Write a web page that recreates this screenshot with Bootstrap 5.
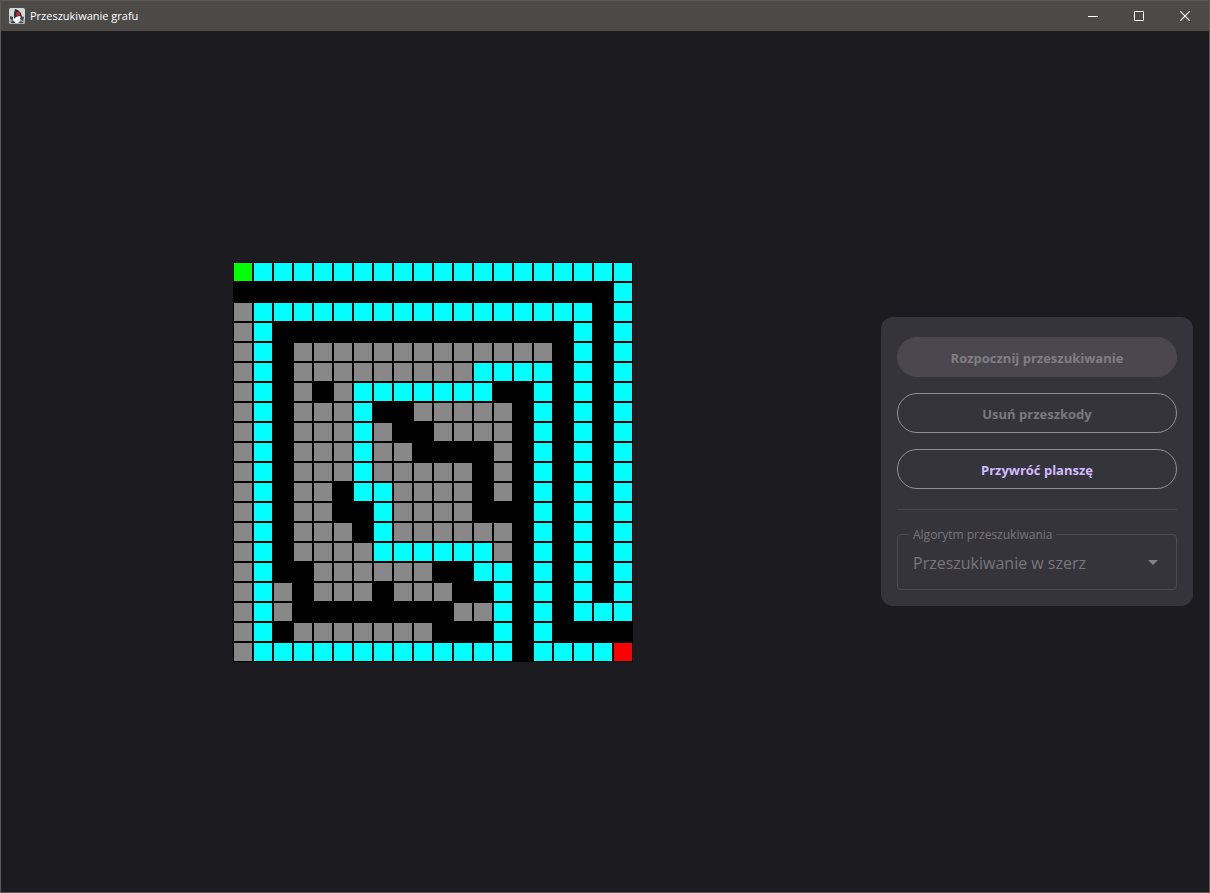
<!DOCTYPE html>
<html lang="pl" data-bs-theme="dark">
<head>
<meta charset="utf-8">
<meta name="viewport" content="width=device-width, initial-scale=1">
<title>Przeszukiwanie grafu</title>
<link href="https://cdn.jsdelivr.net/npm/bootstrap@5.3.0/dist/css/bootstrap.min.css" rel="stylesheet">
<style>
  body { font-family: "Open Sans", "Noto Sans", sans-serif; background: #1c1b1f; }
  .app-window { border: 1px solid #5a5957; }
  .title-bar { height: 30px; background: #4b4a47; color: #fff; font-size: 11px; line-height: 16px; padding-right: 1px; }
  .app-name { margin: 0 auto 0 5px; }
  .win-btn { width: 46px; height: 28px; color: #fff; }
  .board { display: grid; grid-template-columns: repeat(20, 18px); grid-auto-rows: 18px; gap: 2px; padding: 1px; background: #000; }
  .cell-start { background: #0f0; }
  .cell-end { background: #f00; }
  .cell-path { background: #0ff; }
  .cell-seen { background: #888; }
  .side-panel { width: 312px; padding: 20px 16px 16px; border-radius: 12px; background: #36343b; }
  .pill { height: 40px; font-size: 13px; font-weight: 700; line-height: 20px; border-radius: 20px; padding: 2px 12px 0; --bs-btn-disabled-opacity: 1; --bs-btn-disabled-color: #7b797f; }
  .pill-filled { --bs-btn-disabled-color: #807e84; --bs-btn-disabled-bg: #4a484e; --bs-btn-disabled-border-color: #4a484e; }
  .pill-outline { --bs-btn-color: #d0bcff; --bs-btn-border-color: #938f99; --bs-btn-disabled-border-color: #938f99; --bs-btn-hover-color: #d0bcff; --bs-btn-hover-border-color: #938f99; }
  .divider { color: #49454f; opacity: 1; margin: 20px 0 16px; }
  .field-box { border: 1px solid #4c4a51; border-radius: 4px; padding: 0 8px; height: 64px; }
  .field-box legend { float: none; width: auto; margin: 0 0 0 3px; padding: 1px 4px 0; font-size: 12px; line-height: 16px; color: #78767c; }
  .algo-select { appearance: none; width: 100%; height: 40px; border: 0; padding: 0 7px; background: transparent; color: #78767c; font-size: 16px; opacity: 1; }
  .caret { right: 10px; top: 17px; pointer-events: none; }
</style>
</head>
<body>
<div class="app-window min-vh-100 d-flex flex-column">
  <header class="title-bar d-flex align-items-center">
    <svg class="ms-2" width="16" height="16" viewBox="0 0 16 16" aria-hidden="true">
      <rect width="16" height="16" rx="2" fill="#d5d8db"/>
      <rect y="11" width="16" height="5" rx="2" fill="#a9adb2"/>
      <path d="M6 1l2 1 3 3 1 4-1 4-2 2H6l-2-3 1-5z" fill="#f5f6f7"/>
      <path d="M6 1l3 1 3 3 1 4-3-1-3 1-2 2V5z" fill="#303338"/>
      <path d="M4 9L1 8v3l3 1zM12 8l3 1-1 4-3-2zM3 12l3 2v1H2zM11 13l3 1v1h-4z" fill="#41464c"/>
      <circle cx="9" cy="6" r="2" fill="#d9232e"/>
    </svg>
    <span class="app-name">Przeszukiwanie grafu</span>
    <button class="btn win-btn p-0 border-0 rounded-0 d-flex align-items-center justify-content-center" aria-label="Minimalizuj"><svg width="10" height="10" stroke="currentColor"><path d="M0 5.5h10"/></svg></button>
    <button class="btn win-btn p-0 border-0 rounded-0 d-flex align-items-center justify-content-center" aria-label="Maksymalizuj"><svg width="10" height="10" stroke="currentColor" fill="none"><path d="M.5.5h9v9h-9z"/></svg></button>
    <button class="btn win-btn p-0 border-0 rounded-0 d-flex align-items-center justify-content-center" aria-label="Zamknij"><svg width="10" height="10" stroke="currentColor" stroke-width="1.2"><path d="M0 0l10 10M10 0L0 10"/></svg></button>
  </header>
  <main class="flex-grow-1 d-flex align-items-center">
    <div class="flex-grow-1 d-flex justify-content-center">
      <div class="board" id="board" role="img" aria-label="Plansza"></div>
    </div>
    <aside class="side-panel mx-3">
      <div class="d-grid gap-3">
        <button class="btn pill pill-filled" disabled>Rozpocznij przeszukiwanie</button>
        <button class="btn pill pill-outline" disabled>Usuń przeszkody</button>
        <button class="btn pill pill-outline">Przywróć planszę</button>
      </div>
      <hr class="divider">
      <fieldset class="field-box">
        <legend><label for="algo">Algorytm przeszukiwania</label></legend>
        <div class="position-relative">
          <select class="algo-select" id="algo" disabled><option>Przeszukiwanie w szerz</option></select>
          <svg class="caret position-absolute" width="10" height="5" fill="#848288"><path d="M0 0h10L5 5z"/></svg>
        </div>
      </fieldset>
    </aside>
  </main>
</div>
<script src="https://cdn.jsdelivr.net/npm/bootstrap@5.3.0/dist/js/bootstrap.bundle.min.js"></script>
<script>
  // S start, E end, c path, g visited, # obstacle
  const maze = [
    'Sccccccccccccccccccc',
    '###################c',
    'gccccccccccccccccc#c',
    'gc###############c#c',
    'gc#ggggggggggggg#c#c',
    'gc#gggggggggcccc#c#c',
    'gc#g#gccccccc##c#c#c',
    'gc#gggc##ggggg#c#c#c',
    'gc#gggcg##gggg#c#c#c',
    'gc#gggcgg####g#c#c#c',
    'gc#gggcggggg#g#c#c#c',
    'gc#gg#ccgggg#g#c#c#c',
    'gc#gg##cgggg###c#c#c',
    'gc#ggg#cgggggg#c#c#c',
    'gc#ggggccccccg#c#c#c',
    'gc##gggggg##cc#c#c#c',
    'gcg#ggg#ggg##c#c#c#c',
    'gcg########ggc#c#ccc',
    'gc#ggggggg###c#c####',
    'gccccccccccccc#ccccE'
  ];
  const kinds = { S: 'cell-start', E: 'cell-end', c: 'cell-path', g: 'cell-seen', '#': 'cell-wall' };
  const board = document.getElementById('board');
  for (const ch of maze.join('')) {
    const cell = document.createElement('div');
    cell.className = kinds[ch];
    board.append(cell);
  }
</script>
</body>
</html>
